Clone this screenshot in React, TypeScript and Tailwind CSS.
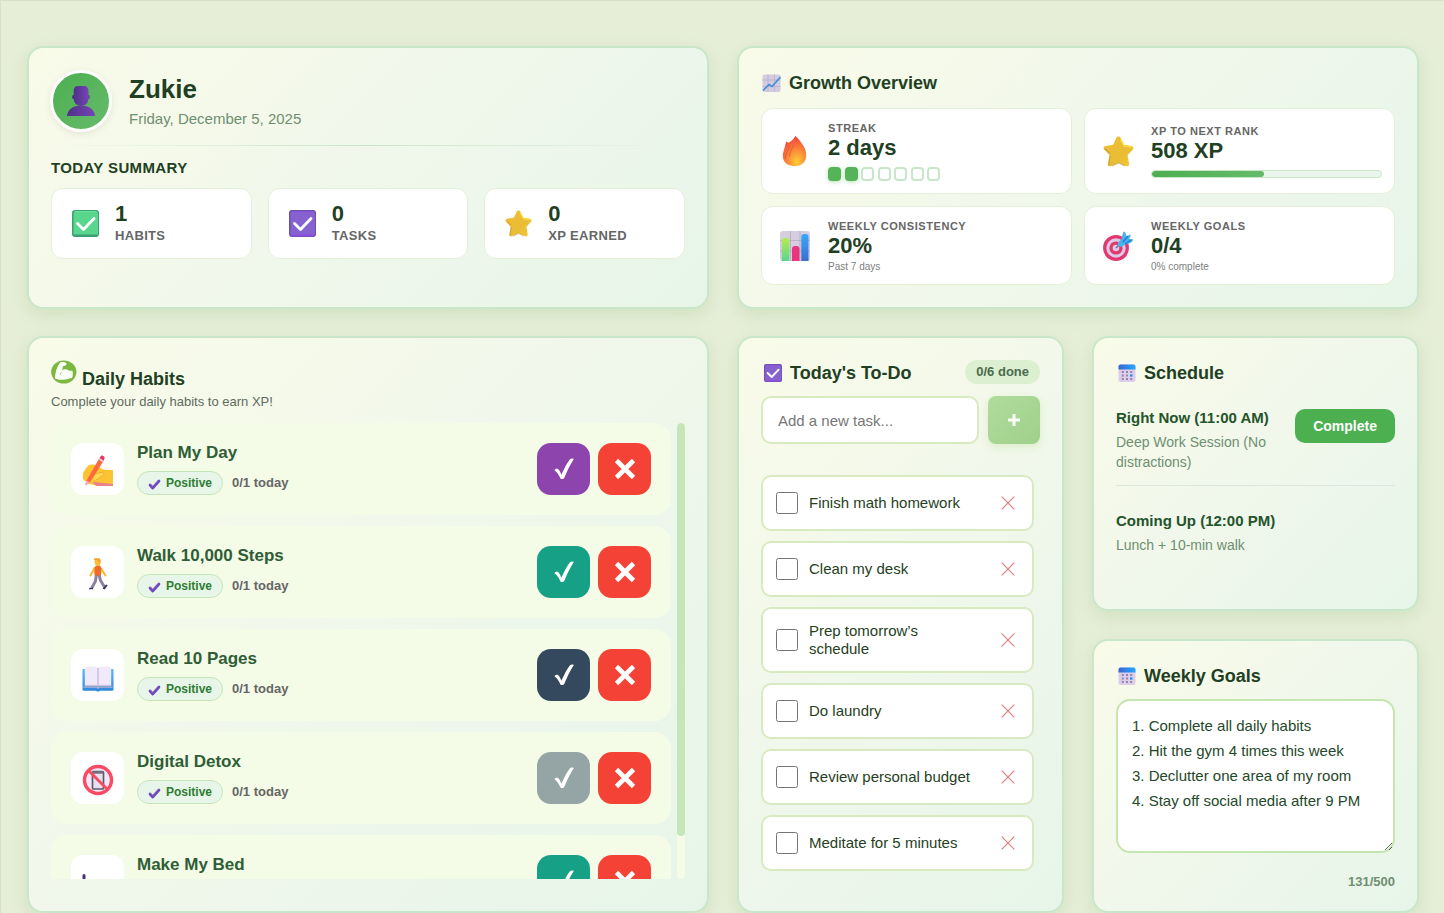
import { useState } from "react";
import type { ReactNode } from "react";

interface Habit {
    id: number;
    name: string;
    color: string;
    icon: ReactNode;
}

interface Task {
    id: number;
    text: string;
    done: boolean;
}

/* ---------- Icons ---------- */

function PersonIcon() {
    return (
        <svg viewBox="0 0 30 32" className="h-8 w-[30px]" aria-hidden="true">
            <defs>
                <linearGradient id="person" x1="0" x2="1">
                    <stop offset="0" stopColor="#50308a" />
                    <stop offset="1" stopColor="#7545b5" />
                </linearGradient>
            </defs>
            <path d="M1 31C1.500 25 6.500 21.500 11 21h8C23.500 21.500 28.500 25 29 31z" fill="url(#person)" />
            <ellipse cx="7.400" cy="12" rx="1.300" ry="2" fill="#4b2b82" />
            <ellipse cx="22.600" cy="12" rx="1.300" ry="2" fill="#6a3fa8" />
            <path d="M7.700 6c0-4 2-5 4.800-5h5.500C21 1 22.500 3 22.500 6v7.500c0 4.500-3 7.500-7.300 7.500s-7.500-3-7.500-7.500z" fill="url(#person)" />
        </svg>
    );
}

function CheckSquareIcon({ tone, className }: { tone: "green" | "purple"; className: string }) {
    const c = tone === "green" ? ["#58d68d", "#3f9f74", "#6ae59c"] : ["#8562cf", "#6a52a0", "#8a4fe0"];
    return (
        <svg viewBox="0 0 27 27" className={className} aria-hidden="true">
            <rect width="27" height="27" rx="3" fill={c[1]} />
            <rect x="1.500" y="1.500" width="24.500" height="24" rx="2" fill={c[0]} />
            <path d="M2.500 1.500h22" stroke={c[2]} strokeWidth="1" />
            <path d="M2 25.500h23" stroke={tone === "green" ? c[1] : c[2]} strokeWidth="2" />
            <path d="M5.500 13.500l6 6L22 8.500" fill="none" stroke="#fff" strokeWidth="2.800" strokeLinecap="round" strokeLinejoin="round" />
        </svg>
    );
}

function StarIcon({ className }: { className: string }) {
    return (
        <svg viewBox="0 0 30 30" className={className} aria-hidden="true">
            <defs>
                <linearGradient id="star" x1="0" x2="1" y2="1">
                    <stop offset="0" stopColor="#f0bd35" />
                    <stop offset=".6" stopColor="#e8bd35" />
                    <stop offset="1" stopColor="#f3c92f" />
                </linearGradient>
            </defs>
            <path d="M13 1.800c.9-1.700 3.100-1.700 4 0l3.200 6.700 7.200 1.100c2 .3 2.700 2.300 1.300 3.800l-4.900 5.100 1.400 8.200c.3 2-1.600 3.300-3.300 2.300L15 25.800 8.100 29c-1.700 1-3.600-.3-3.300-2.300l1.400-8.200-4.900-5.100C-.1 11.900.600 9.900 2.600 9.600l7.200-1.100z" fill="url(#star)" />
            <path d="M5.500 28.800l1.500-9.500M1.500 12l5.500 5M9 29l6-3 6 3" stroke="#b98a2c" strokeWidth="1" fill="none" opacity=".6" />
            <path d="M17 3l3.200 6.500 7.500 1.200" stroke="#ffe03a" strokeWidth="1.300" fill="none" />
        </svg>
    );
}

function TrendIcon() {
    return (
        <svg viewBox="0 0 20 20" className="size-5" aria-hidden="true">
            <rect x="1.500" y="1.500" width="18" height="17.500" rx="2" fill="#d3cbe0" />
            <path d="M7 1.500v17M13.500 1.500v17M1.500 7h18M1.500 13.500h18" stroke="#bab0cb" strokeWidth=".8" />
            <path d="M2 17.500l6-6 3 2 8.500-9.500" fill="none" stroke="#3f8fdc" strokeWidth="1.600" />
        </svg>
    );
}

function FireIcon() {
    return (
        <svg viewBox="0 0 30 30" className="size-[30px]" aria-hidden="true">
            <defs>
                <radialGradient id="fire" cx=".6" cy=".85" r=".85">
                    <stop offset="0" stopColor="#ffce35" />
                    <stop offset=".35" stopColor="#fb9a38" />
                    <stop offset=".7" stopColor="#f8693a" />
                    <stop offset="1" stopColor="#ee4038" />
                </radialGradient>
            </defs>
            <path d="M15.500 0c3.500 3 5 5.500 8 10 4.500 7 4.500 20-8.500 20C3 30 1.500 21 3.800 14.500 5 11 5 9 6.500 5c.5 1.200 1.500 2 2.500 1.500C12 5 13.500 3 15.500 0z" fill="url(#fire)" />
            <path d="M10 10c-2 5-5 8-4.500 13M14 8.500c-2 5-4.500 7-4.500 12" stroke="#d5562f" strokeWidth="1" fill="none" opacity=".7" />
        </svg>
    );
}

function BarsIcon() {
    return (
        <svg viewBox="0 0 30 30" className="size-[30px]" aria-hidden="true">
            <defs>
                <linearGradient id="barGreen" y2="1" x2="0">
                    <stop offset="0" stopColor="#b6ec4c" />
                    <stop offset="1" stopColor="#58d68d" />
                </linearGradient>
                <linearGradient id="barBlue" y2="1" x2="0">
                    <stop offset="0" stopColor="#35a8fb" />
                    <stop offset="1" stopColor="#3a6fd0" />
                </linearGradient>
            </defs>
            <rect width="30" height="30" rx="3" fill="#d5cde0" />
            <path d="M10.500 0v30M20 0v30M0 9.500h30M0 20h30" stroke="#b4abc2" strokeWidth=".8" />
            <path d="M1.800 30V10a3 3 0 013-3h1.500a3 3 0 013 3v20z" fill="url(#barGreen)" />
            <path d="M12 30V18a3 3 0 013-3h1.500a3 3 0 013 3v12z" fill="#e8357c" />
            <path d="M21.300 30V6a3 3 0 013-3h1.200a3 3 0 013 3v24z" fill="url(#barBlue)" />
        </svg>
    );
}

function TargetIcon() {
    return (
        <svg viewBox="0 0 30 30" className="size-[30px]" aria-hidden="true">
            <circle cx="13" cy="17" r="13" fill="#e2386d" />
            <circle cx="13" cy="17" r="9.700" fill="#dccbe8" />
            <circle cx="13" cy="17" r="6.600" fill="#e2386d" />
            <circle cx="13" cy="17" r="3.300" fill="#dccbe8" />
            <path d="M13 17l6-6" stroke="#7a6a94" strokeWidth="1.600" />
            <path d="M15 14.500c-1-2.500 1-4.500 3-5.500l2-7c.2-1 1-1.500 2-1l2 5 2-2c1-1 2 0 1.500 1.500L26 8h3c1 0 1.300 1 .5 2-1 1.500-2 2-3.500 2.500L21 14c-1.500 2-4 2.500-6 .5z" fill="#4ab3ee" />
            <path d="M20 11l5-6M22 13l6-4" stroke="#2778d8" strokeWidth="1.500" />
        </svg>
    );
}

function ArmIcon() {
    return (
        <svg viewBox="0 0 26 24" className="h-6 w-[26px]" aria-hidden="true">
            <ellipse cx="12.800" cy="12" rx="12.600" ry="11.500" fill="#7cb740" />
            <path d="M8.200 3.800c.8-1.300 2-1.700 3.300-1.700 1.500 0 2.800.2 3.600 1 .9.900.4 2.100-.6 2.300-.8.300-1.700.3-2.500.8l-.9 4.300c1.800-1.800 5-1.800 6.700.2l3.600.1c.6 2.400.6 5-.3 7.200-2.600.2-4.300 1.300-7 1.600-3.500.4-7.500.2-10.200-1.300C4.100 13.500 5.600 7.500 8.200 3.800z" fill="#fbfdf8" />
            <path d="M10.300 12.500c-.7.500-1 1.300-1 2.200" stroke="#7cb740" fill="none" strokeWidth=".8" />
        </svg>
    );
}

function CalendarIcon() {
    return (
        <svg viewBox="0 0 20 20" className="size-5" aria-hidden="true">
            <defs>
                <linearGradient id="cal" x2="1">
                    <stop offset="0" stopColor="#3566d0" />
                    <stop offset="1" stopColor="#28a8ff" />
                </linearGradient>
            </defs>
            <rect x="2.500" y="1.500" width="17" height="17.500" rx="2" fill="#dccdeb" />
            <path d="M2.500 6.500v-3a2 2 0 012-2h13a2 2 0 012 2v3z" fill="url(#cal)" />
            <path d="M5.800 9h2M10 9h2M14.200 9h2M5.800 12.500h2M10 12.500h2M5.800 16h2M10 16h2M14.200 16h2" stroke="#9487ac" strokeWidth="2" />
            <path d="M14 12.500h2.500" stroke="#2c8bf0" strokeWidth="2.300" />
        </svg>
    );
}

function PurpleCheckIcon() {
    return (
        <svg viewBox="0 0 13 13" className="size-[13px]" aria-hidden="true">
            <path d="M2 8l2.700 3L11 4" fill="none" stroke="#7146c4" strokeWidth="2.700" strokeLinecap="round" strokeLinejoin="round" />
            <path d="M2 6.800l2.700 2.700L10 3.500" fill="none" stroke="#8a7ba0" strokeWidth="1" opacity=".7" />
        </svg>
    );
}

function WritingIcon() {
    return (
        <svg viewBox="0 0 32 32" className="size-8" aria-hidden="true">
            <path d="M1 20c0-3 3-7 5.500-9.500 1.500-1.500 6-1.500 8 0 2 1.200 5 3.500 7 4 4 .5 7 .5 9.500.5v16H15l-7-2-5-3c-2-1-2.500-4-2-6z" fill="#fcc433" />
            <path d="M13 19c3-1 6-2.500 8.500-1 2 2-3 3.500-5 5.500l-5 3" fill="#ffd84e" stroke="#f2a83a" strokeWidth="1" />
            <path d="M15 31l-4.500-3c2-1.500 4-1 6-.5L31 29v2z" fill="#e9828a" />
            <path d="M17.300 3.300L4.500 25.500 3.300 30.500l4.500-3L21.500 6z" fill="#fb6a3c" />
            <path d="M18.300 1.800c.8-1.500 2-1.500 3-.8s1.800 1.800 1 3L21.500 6l-4.200-2.700z" fill="#e8395d" />
            <path d="M16.500 4.500l1-1.500 4 2.500-1 1.600z" fill="#d9cde8" />
            <path d="M4.500 25.500l-1.200 5 4.500-3z" fill="#f5a8b8" />
        </svg>
    );
}

function WalkingIcon() {
    return (
        <svg viewBox="0 0 32 32" className="size-8" aria-hidden="true">
            <path d="M12.500 10L8.500 17.500M19 10.500l4.500 7" stroke="#fcb72b" strokeWidth="2" strokeLinecap="round" />
            <path d="M14.500 16l-1 7-3.500 6.500M17 16.500l1.500 6 4 6.500" stroke="#8e839f" strokeWidth="3" fill="none" strokeLinejoin="round" />
            <path d="M7 30.800c0-1 1-1 4-1.500v2H7zM20.500 30.500l3.500-4 1.700.7-3 4.300z" fill="#3d346a" />
            <path d="M13.500 8c1.500-1 4-1 5.300.5 1 3 .5 6 .2 9h-6.200c-.8-3-.8-6.500.7-9.500z" fill="#f06b25" />
            <path d="M12.500 1c2-1.500 5.500-.8 6 1.500V6c-1 2-4 2.500-5 1-1-2-1-4-1-6z" fill="#fcbe32" />
            <path d="M12 .5h6l.8 4-2-.5-1.500-2H12z" fill="#f1a227" />
        </svg>
    );
}

function BookIcon() {
    return (
        <svg viewBox="0 0 32 32" className="size-8" aria-hidden="true">
            <defs>
                <linearGradient id="book" x2="0" y2="1">
                    <stop offset="0" stopColor="#57baf0" />
                    <stop offset="1" stopColor="#2f86dc" />
                </linearGradient>
            </defs>
            <path d="M.500 8h31v20.500c0 .8-.5 1.200-1.300 1.200H18c-.5 1-3.500 1-4 0H1.800C1 29.700.5 29.300.5 28.500z" fill="url(#book)" />
            <path d="M1.500 25.500h29v1.300h-13L16 28l-1.500-1.200h-13z" fill="#b9b0cd" />
            <path d="M2.800 6.500C7 5 13 5.500 16 7c3-1.500 9-2 13.200-.5V25H2.800z" fill="#f0e9f9" />
            <path d="M16 7v18" stroke="#c4b9d8" strokeWidth="1.300" />
            <path d="M3 24.500h26" stroke="#cdc2de" strokeWidth="1.300" />
        </svg>
    );
}

function NoPhoneIcon() {
    return (
        <svg viewBox="0 0 32 32" className="size-8" aria-hidden="true">
            <circle cx="16" cy="16" r="13.500" fill="#f3e8fa" />
            <rect x="10.500" y="7.500" width="11" height="17.500" rx="1" fill="#e9dff2" stroke="#5e5a66" strokeWidth="1.700" />
            <path d="M10.500 8.500h11" stroke="#77717f" strokeWidth="2.500" />
            <circle cx="16" cy="16" r="13.500" fill="none" stroke="#fb4a64" strokeWidth="3.400" />
            <path d="M6.500 6.500l19 19" stroke="#fb4a5c" strokeWidth="2.800" />
        </svg>
    );
}

function BedIcon() {
    return (
        <svg viewBox="0 0 32 32" className="size-8" aria-hidden="true">
            <path d="M.500 8.500a1.500 1.500 0 013 0V20h28v8h-3v-3h-25v3h-3z" fill="#46307c" />
            <rect x="4" y="14" width="27" height="6" rx="2" fill="#4aa7ee" />
        </svg>
    );
}

function DoneGlyph() {
    return (
        <svg viewBox="0 0 22 24" className="h-6 w-[22px]" aria-hidden="true">
            <path d="M1.500 13.300c1-1.500 2.700-1.800 3.800-1 1.200 1.300 2.200 3 3 5.500C11 12.500 13.500 6.500 17 2.300c.8-.9 2.700-.8 3.800-.4C16.800 8 13.700 15 11.200 21c-.5 1.200-3.200 1.600-3.900.2C6 18.500 4.500 15.500 1.500 13.300z" fill="#fff" />
        </svg>
    );
}

function MissGlyph() {
    return (
        <svg viewBox="0 0 22 22" className="size-[22px]" aria-hidden="true">
            <path d="M2.500 2.500l17 17M19.500 2.500l-17 17" stroke="#fff" strokeWidth="4.600" />
        </svg>
    );
}

function RemoveGlyph() {
    return (
        <svg viewBox="0 0 14 14" className="size-3.5" aria-hidden="true">
            <path d="M.700.700l12.600 12.600M13.300.700L.700 13.300" stroke="#df7f7f" strokeWidth="1.200" />
        </svg>
    );
}

/* ---------- Shared pieces ---------- */

function Card({ className = "pb-[22px]", children }: { className?: string; children: ReactNode }) {
    return (
        <section
            className={`min-w-0 rounded-2xl border-2 border-[#c8e6c9] bg-linear-135 from-[#f9fbe9] via-[#f0f7eb] to-[#e7f5e9] px-[22px] pt-[22px] shadow-[0_6px_18px_rgba(120,180,90,0.2)] ${className}`}
        >
            {children}
        </section>
    );
}

function CardTitle({ icon, children }: { icon: ReactNode; children: ReactNode }) {
    return (
        <h2 className="flex items-center gap-2 text-lg/[26px] font-bold text-[#1f4023]">
            {icon}
            {children}
        </h2>
    );
}

function SummaryStat({ icon, value, label }: { icon: ReactNode; value: string; label: string }) {
    return (
        <div className="flex h-[71px] items-center gap-4 rounded-xl border border-[#e4f1d8] bg-white px-5">
            {icon}
            <div>
                <div className="text-[22px]/[24px] font-bold text-[#1f4023]">{value}</div>
                <div className="text-[13px]/[20px] font-bold tracking-wide text-[#666] uppercase">{label}</div>
            </div>
        </div>
    );
}

function GrowthTile({ icon, label, value, children }: { icon: ReactNode; label: string; value: string; children: ReactNode }) {
    return (
        <div className="flex items-center gap-3 rounded-xl border border-[#e4f1d8] bg-white p-3">
            <div className="flex w-[42px] shrink-0 justify-center">{icon}</div>
            <div className="min-w-0 flex-1">
                <div className="text-[11px]/[14px] font-bold tracking-wider text-[#666] uppercase">{label}</div>
                <div className="text-[22px]/[26px] font-bold text-[#1f4023]">{value}</div>
                {children}
            </div>
        </div>
    );
}

/* ---------- Cards ---------- */

function ProfileCard() {
    return (
        <Card>
            <div className="flex h-[62px] items-center gap-[18px]">
                <div className="flex size-[60px] items-center justify-center rounded-full border-2 border-white bg-linear-135 from-[#4caf50] to-[#66bb6a] shadow-[0_2px_8px_rgba(0,0,0,0.1)] ring-1 ring-white">
                    <PersonIcon />
                </div>
                <div>
                    <h1 className="text-[26px]/[32px] font-bold text-[#1f4023]">Zukie</h1>
                    <p className="mt-1 text-[15px]/[20px] text-[#6f8f72]">Friday, December 5, 2025</p>
                </div>
            </div>
            <div className="mt-[13px] h-px bg-linear-to-r from-transparent via-[#c8e6c9] to-transparent" />
            <h2 className="mt-3 text-[15px]/[20px] font-bold tracking-wide text-[#1f4023] uppercase">Today Summary</h2>
            <div className="mt-2.5 grid grid-cols-3 gap-4">
                <SummaryStat icon={<CheckSquareIcon tone="green" className="size-[27px]" />} value="1" label="Habits" />
                <SummaryStat icon={<CheckSquareIcon tone="purple" className="size-[27px]" />} value="0" label="Tasks" />
                <SummaryStat icon={<StarIcon className="size-[27px]" />} value="0" label="XP Earned" />
            </div>
        </Card>
    );
}

function GrowthCard() {
    const streak = 2;
    const days = [0, 1, 2, 3, 4, 5, 6];

    return (
        <Card>
            <CardTitle icon={<TrendIcon />}>Growth Overview</CardTitle>
            <div className="mt-3 grid grid-cols-2 gap-3">
                <GrowthTile icon={<FireIcon />} label="Streak" value="2 days">
                    <div className="mt-1.5 flex w-28 justify-between">
                        {days.map((d) => (
                            <span
                                key={d}
                                className={
                                    d < streak
                                        ? "h-3.5 w-[13px] rounded-[4px] bg-[#55b359] shadow-[0_1px_4px_rgba(76,175,80,0.4)]"
                                        : "h-3.5 w-[13px] rounded-[4px] border-2 border-[#c8e6c9] bg-white"
                                }
                            />
                        ))}
                    </div>
                </GrowthTile>
                <GrowthTile icon={<StarIcon className="size-[31px]" />} label="XP to next rank" value="508 XP">
                    <div className="mt-1.5 h-2 overflow-hidden rounded-full border border-[#c8e6c9] bg-[#eaf5eb]">
                        <div className="h-full rounded-full bg-linear-to-r from-[#4caf50] to-[#66bb6a]" style={{ width: "49%" }} />
                    </div>
                </GrowthTile>
                <GrowthTile icon={<BarsIcon />} label="Weekly consistency" value="20%">
                    <div className="mt-0.5 text-[10px]/[11px] text-[#808080]">Past 7 days</div>
                </GrowthTile>
                <GrowthTile icon={<TargetIcon />} label="Weekly goals" value="0/4">
                    <div className="mt-0.5 text-[10px]/[11px] text-[#808080]">0% complete</div>
                </GrowthTile>
            </div>
        </Card>
    );
}

const habits: Habit[] = [
    { id: 1, name: "Plan My Day", color: "bg-[#8e44ad]", icon: <WritingIcon /> },
    { id: 2, name: "Walk 10,000 Steps", color: "bg-[#16a085]", icon: <WalkingIcon /> },
    { id: 3, name: "Read 10 Pages", color: "bg-[#34495e]", icon: <BookIcon /> },
    { id: 4, name: "Digital Detox", color: "bg-[#95a5a6]", icon: <NoPhoneIcon /> },
    { id: 5, name: "Make My Bed", color: "bg-[#16a085]", icon: <BedIcon /> },
];

function HabitRow({ habit }: { habit: Habit }) {
    return (
        <li className="flex h-[92px] shrink-0 items-center rounded-2xl bg-[#f4fbe7] px-5">
            <div className="flex h-[52px] w-[53px] shrink-0 items-center justify-center rounded-xl bg-white pt-1">{habit.icon}</div>
            <div className="ml-[13px] min-w-0 flex-1">
                <h3 className="text-[17px]/[20px] font-bold text-[#2f5d36]">{habit.name}</h3>
                <div className="mt-2 flex items-center gap-[9px]">
                    <span className="flex h-6 items-center gap-[5px] rounded-full border border-[#c5e6b8] bg-[#e8f5e9] px-2.5 text-xs font-bold text-[#2e7d32]">
                        <PurpleCheckIcon />
                        Positive
                    </span>
                    <span className="text-[13px]/[20px] font-bold text-[#666]">0/1 today</span>
                </div>
            </div>
            <div className="flex gap-2">
                <button aria-label={`Complete ${habit.name}`} className={`flex h-[52px] w-[53px] items-center justify-center rounded-[14px] ${habit.color}`}>
                    <DoneGlyph />
                </button>
                <button aria-label={`Miss ${habit.name}`} className="flex h-[52px] w-[53px] items-center justify-center rounded-[14px] bg-[#f44336]">
                    <MissGlyph />
                </button>
            </div>
        </li>
    );
}

function HabitsCard() {
    const [scroll, setScroll] = useState(0);

    return (
        <Card className="col-span-2 pb-8">
            <div className="flex h-8 items-end gap-[5px]">
                <div className="self-start">
                    <ArmIcon />
                </div>
                <h2 className="text-lg/[26px] font-bold text-[#1f4023]">Daily Habits</h2>
            </div>
            <p className="text-[13px]/[20px] text-[#5f6b60]">Complete your daily habits to earn XP!</p>
            <div className="mt-[11px] flex h-[456px] gap-1.5">
                <ul
                    onScroll={(e) => setScroll(e.currentTarget.scrollTop / e.currentTarget.scrollHeight)}
                    className="flex min-w-0 flex-1 flex-col gap-[11px] overflow-y-auto [scrollbar-width:none]"
                >
                    {habits.map((h) => (
                        <HabitRow key={h.id} habit={h} />
                    ))}
                </ul>
                {/* slim scrollbar that follows the list */}
                <div className="w-2 overflow-hidden rounded-full bg-[#f4fbe7]" aria-hidden="true">
                    <div className="h-[413px] rounded-full bg-[#c5e6b8]" style={{ marginTop: scroll * 456 }} />
                </div>
            </div>
        </Card>
    );
}

function TodoCard() {
    const [tasks, setTasks] = useState<Task[]>([
        { id: 1, text: "Finish math homework", done: false },
        { id: 2, text: "Clean my desk", done: false },
        { id: 3, text: "Prep tomorrow’s schedule", done: false },
        { id: 4, text: "Do laundry", done: false },
        { id: 5, text: "Review personal budget", done: false },
        { id: 6, text: "Meditate for 5 minutes", done: false },
    ]);
    const [text, setText] = useState("");

    function addTask() {
        if (!text.trim()) return;
        setTasks([...tasks, { id: Date.now(), text: text.trim(), done: false }]);
        setText("");
    }

    function toggleTask(id: number) {
        setTasks(tasks.map((t) => (t.id === id ? { ...t, done: !t.done } : t)));
    }

    return (
        <Card>
            <div className="flex items-start justify-between">
                <CardTitle icon={<CheckSquareIcon tone="purple" className="ml-[3px] size-[18px]" />}>Today's To-Do</CardTitle>
                <span className="rounded-full bg-[#dcefd0] px-[11px] text-[13px]/[24px] font-bold text-[#4a6b4d]">
                    {tasks.filter((t) => t.done).length}/{tasks.length} done
                </span>
            </div>
            <div className="mt-2.5 flex gap-[9px]">
                <input
                    aria-label="New task"
                    placeholder="Add a new task..."
                    value={text}
                    onChange={(e) => setText(e.target.value)}
                    className="h-12 min-w-0 flex-1 rounded-[10px] border-2 border-[#d7eac0] bg-white px-[15px] text-[15px] text-[#1f4023] placeholder:text-[#777]"
                />
                <button
                    aria-label="Add task"
                    onClick={addTask}
                    className="flex h-12 w-[52px] items-center justify-center rounded-lg bg-linear-135 from-[#b0dc9c] to-[#9fd08a] shadow-[0_3px_8px_rgba(139,195,74,0.2)]"
                >
                    <svg viewBox="0 0 12 12" className="size-3" aria-hidden="true">
                        <path d="M6 0v12M0 6h12" stroke="#f8fcf5" strokeWidth="3" />
                    </svg>
                </button>
            </div>
            <ul className="mt-[31px] flex flex-col gap-2.5 pr-1.5">
                {tasks.map((t) => (
                    <li key={t.id} className="flex items-center gap-[11px] rounded-[10px] border-2 border-[#d7eac0] bg-white py-[13px] pr-[11px] pl-[13px]">
                        <input
                            id={`task-${t.id}`}
                            type="checkbox"
                            checked={t.done}
                            onChange={() => toggleTask(t.id)}
                            className="size-[22px] shrink-0"
                        />
                        <label htmlFor={`task-${t.id}`} className="min-w-0 flex-1 pr-2 text-[15px]/[18px] text-[#1f4023]">
                            {t.text}
                        </label>
                        <button
                            aria-label={`Delete ${t.text}`}
                            onClick={() => setTasks(tasks.filter((x) => x.id !== t.id))}
                            className="flex size-[26px] shrink-0 items-center justify-center"
                        >
                            <RemoveGlyph />
                        </button>
                    </li>
                ))}
            </ul>
        </Card>
    );
}

function ScheduleCard() {
    return (
        <Card>
            <CardTitle icon={<CalendarIcon />}>Schedule</CardTitle>
            <div className="mt-[23px] flex items-start justify-between border-b border-[#dbe6dc] pb-[13px]">
                <div className="min-w-0 flex-1">
                    <h3 className="text-[15px]/[18px] font-bold text-[#24542b]">Right Now (11:00 AM)</h3>
                    <p className="mt-[5px] text-sm/[20px] text-[#6f8f72]">Deep Work Session (No distractions)</p>
                </div>
                <button className="h-[34px] rounded-[10px] bg-[#4caf50] px-[18px] text-sm font-bold text-white">Complete</button>
            </div>
            <div className="mt-[26px]">
                <h3 className="text-[15px]/[18px] font-bold text-[#24542b]">Coming Up (12:00 PM)</h3>
                <p className="mt-[5px] text-sm/[20px] text-[#6f8f72]">Lunch + 10-min walk</p>
            </div>
        </Card>
    );
}

const defaultGoals = `1. Complete all daily habits
2. Hit the gym 4 times this week
3. Declutter one area of my room
4. Stay off social media after 9 PM
`;

function GoalsCard() {
    const [goals, setGoals] = useState(defaultGoals);

    return (
        <Card className="pb-4">
            <CardTitle icon={<CalendarIcon />}>Weekly Goals</CardTitle>
            <textarea
                aria-label="Weekly goals"
                maxLength={500}
                value={goals}
                onChange={(e) => setGoals(e.target.value)}
                className="mt-2.5 block h-[154px] w-full resize rounded-[14px] border-2 border-[#c5e6b0] bg-white px-3.5 py-3 text-[15px]/[25px] text-[#24482a]"
            />
            <p className="mt-5 text-right text-[13px]/[18px] font-bold text-[#6f8f72]">{goals.length}/500</p>
        </Card>
    );
}

export default function App() {
    return (
        <main className="min-h-screen border-t border-l border-[#d8dfcb] bg-[#e6eed8] pt-[45px] pr-[25px] pl-[26px] font-['Liberation_Sans',Arial,sans-serif]">
            <div className="grid grid-cols-2 gap-7">
                <ProfileCard />
                <GrowthCard />
            </div>
            <div className="mt-[27px] grid grid-cols-4 gap-7">
                <HabitsCard />
                <TodoCard />
                <div className="grid grid-rows-2 gap-7">
                    <ScheduleCard />
                    <GoalsCard />
                </div>
            </div>
        </main>
    );
}
